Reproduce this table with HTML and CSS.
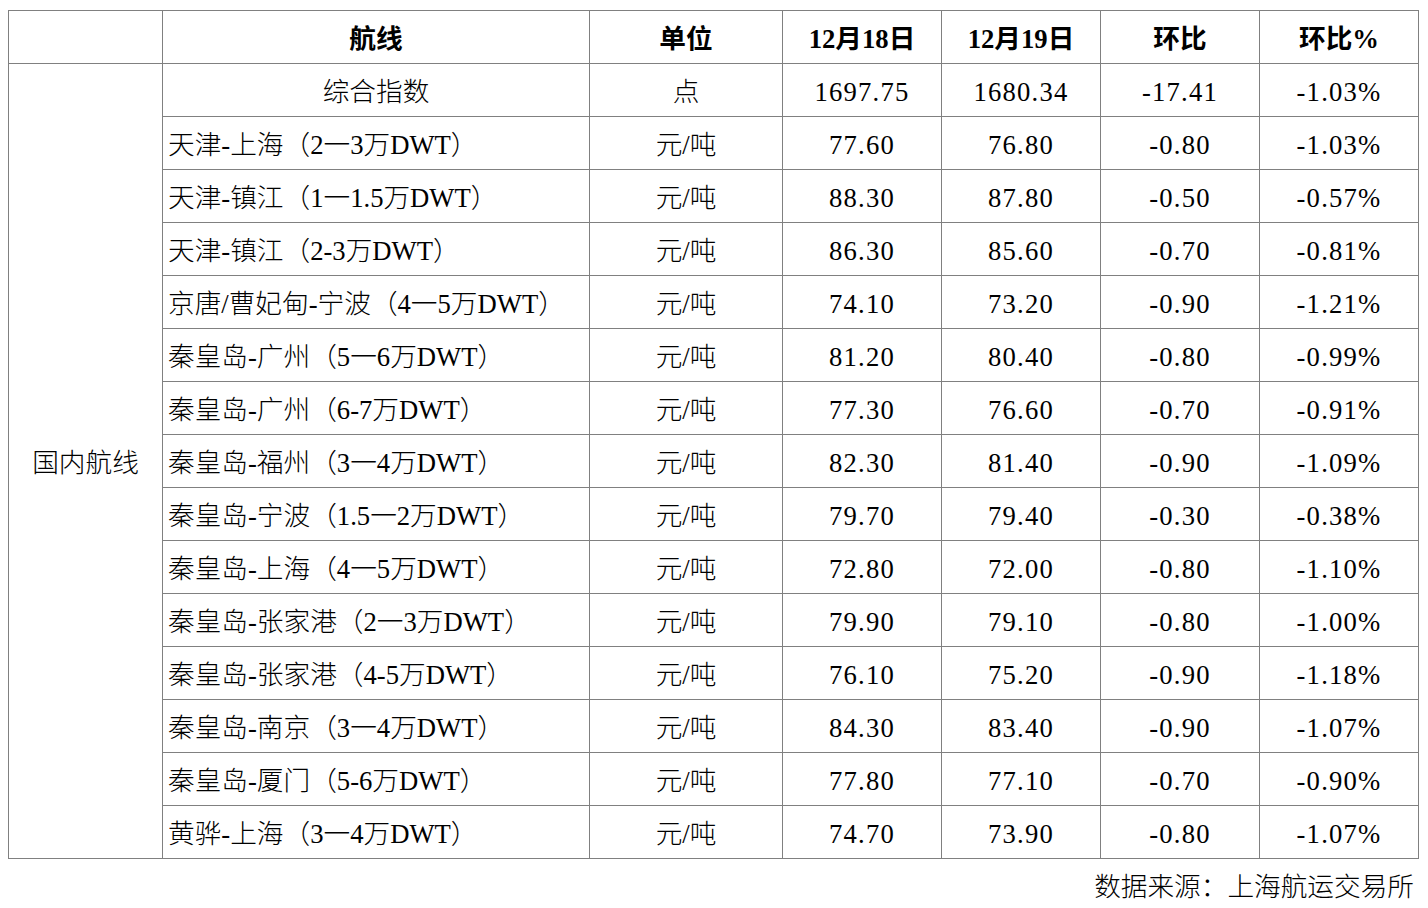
FILE: index.html
```html
<!DOCTYPE html>
<html lang="zh-CN">
<head>
<meta charset="utf-8">
<title>沿海煤炭运价</title>
<link rel="stylesheet" href="styles.css">
</head>
<body>
<div class="wrap">
  <table class="rates">
    <colgroup>
      <col class="c-group">
      <col class="c-route">
      <col class="c-unit">
      <col class="c-num">
      <col class="c-num">
      <col class="c-num">
      <col class="c-num">
    </colgroup>
    <thead>
      <tr>
        <th></th>
        <th>航线</th>
        <th>单位</th>
        <th>12月18日</th>
        <th>12月19日</th>
        <th>环比</th>
        <th>环比%</th>
      </tr>
    </thead>
    <tbody>
      <tr>
        <td class="group" rowspan="15">国内航线</td>
        <td class="route center">综合指数</td>
        <td>点</td>
        <td class="num">1697.75</td>
        <td class="num">1680.34</td>
        <td class="num">-17.41</td>
        <td class="num">-1.03%</td>
      </tr>
      <tr><td class="route">天津-上海（2一3万DWT）</td><td>元/吨</td><td class="num">77.60</td><td class="num">76.80</td><td class="num">-0.80</td><td class="num">-1.03%</td></tr>
      <tr><td class="route">天津-镇江（1一1.5万DWT）</td><td>元/吨</td><td class="num">88.30</td><td class="num">87.80</td><td class="num">-0.50</td><td class="num">-0.57%</td></tr>
      <tr><td class="route">天津-镇江（2-3万DWT）</td><td>元/吨</td><td class="num">86.30</td><td class="num">85.60</td><td class="num">-0.70</td><td class="num">-0.81%</td></tr>
      <tr><td class="route">京唐/曹妃甸-宁波（4一5万DWT）</td><td>元/吨</td><td class="num">74.10</td><td class="num">73.20</td><td class="num">-0.90</td><td class="num">-1.21%</td></tr>
      <tr><td class="route">秦皇岛-广州（5一6万DWT）</td><td>元/吨</td><td class="num">81.20</td><td class="num">80.40</td><td class="num">-0.80</td><td class="num">-0.99%</td></tr>
      <tr><td class="route">秦皇岛-广州（6-7万DWT）</td><td>元/吨</td><td class="num">77.30</td><td class="num">76.60</td><td class="num">-0.70</td><td class="num">-0.91%</td></tr>
      <tr><td class="route">秦皇岛-福州（3一4万DWT）</td><td>元/吨</td><td class="num">82.30</td><td class="num">81.40</td><td class="num">-0.90</td><td class="num">-1.09%</td></tr>
      <tr><td class="route">秦皇岛-宁波（1.5一2万DWT）</td><td>元/吨</td><td class="num">79.70</td><td class="num">79.40</td><td class="num">-0.30</td><td class="num">-0.38%</td></tr>
      <tr><td class="route">秦皇岛-上海（4一5万DWT）</td><td>元/吨</td><td class="num">72.80</td><td class="num">72.00</td><td class="num">-0.80</td><td class="num">-1.10%</td></tr>
      <tr><td class="route">秦皇岛-张家港（2一3万DWT）</td><td>元/吨</td><td class="num">79.90</td><td class="num">79.10</td><td class="num">-0.80</td><td class="num">-1.00%</td></tr>
      <tr><td class="route">秦皇岛-张家港（4-5万DWT）</td><td>元/吨</td><td class="num">76.10</td><td class="num">75.20</td><td class="num">-0.90</td><td class="num">-1.18%</td></tr>
      <tr><td class="route">秦皇岛-南京（3一4万DWT）</td><td>元/吨</td><td class="num">84.30</td><td class="num">83.40</td><td class="num">-0.90</td><td class="num">-1.07%</td></tr>
      <tr><td class="route">秦皇岛-厦门（5-6万DWT）</td><td>元/吨</td><td class="num">77.80</td><td class="num">77.10</td><td class="num">-0.70</td><td class="num">-0.90%</td></tr>
      <tr><td class="route">黄骅-上海（3一4万DWT）</td><td>元/吨</td><td class="num">74.70</td><td class="num">73.90</td><td class="num">-0.80</td><td class="num">-1.07%</td></tr>
    </tbody>
  </table>
  <p class="source">数据来源：上海航运交易所</p>
</div>
</body>
</html>
```

FILE: styles.css
```css
html, body {
  background: #ffffff;
}

body {
  margin: 10px 0 0 8px;
  font-family: "Liberation Serif", "Noto Sans CJK SC", serif;
  font-size: 26.67px;
  color: #000000;
}

.wrap {
  width: 1411px;
}

.rates {
  width: 1411px;
  border-collapse: collapse;
  table-layout: fixed;
}

.c-group { width: 154px; }
.c-route { width: 427px; }
.c-unit  { width: 193px; }
.c-num   { width: 159px; }

.rates th,
.rates td {
  border: 1px solid #808080;
  height: 48px;
  padding: 4px 0 0 0;
  line-height: 30px;
  text-align: center;
  vertical-align: middle;
  font-weight: 300;
  white-space: nowrap;
}

.rates th {
  font-weight: 700;
}

.rates td.route {
  text-align: left;
  padding-left: 5px;
}

.rates td.route.center {
  text-align: center;
  padding-left: 0;
}

.rates td.num {
  letter-spacing: 1.2px;
}

.source {
  margin: 13px 0 0 0;
  padding-right: 5px;
  text-align: right;
  line-height: 30px;
  font-weight: 300;
}
```
